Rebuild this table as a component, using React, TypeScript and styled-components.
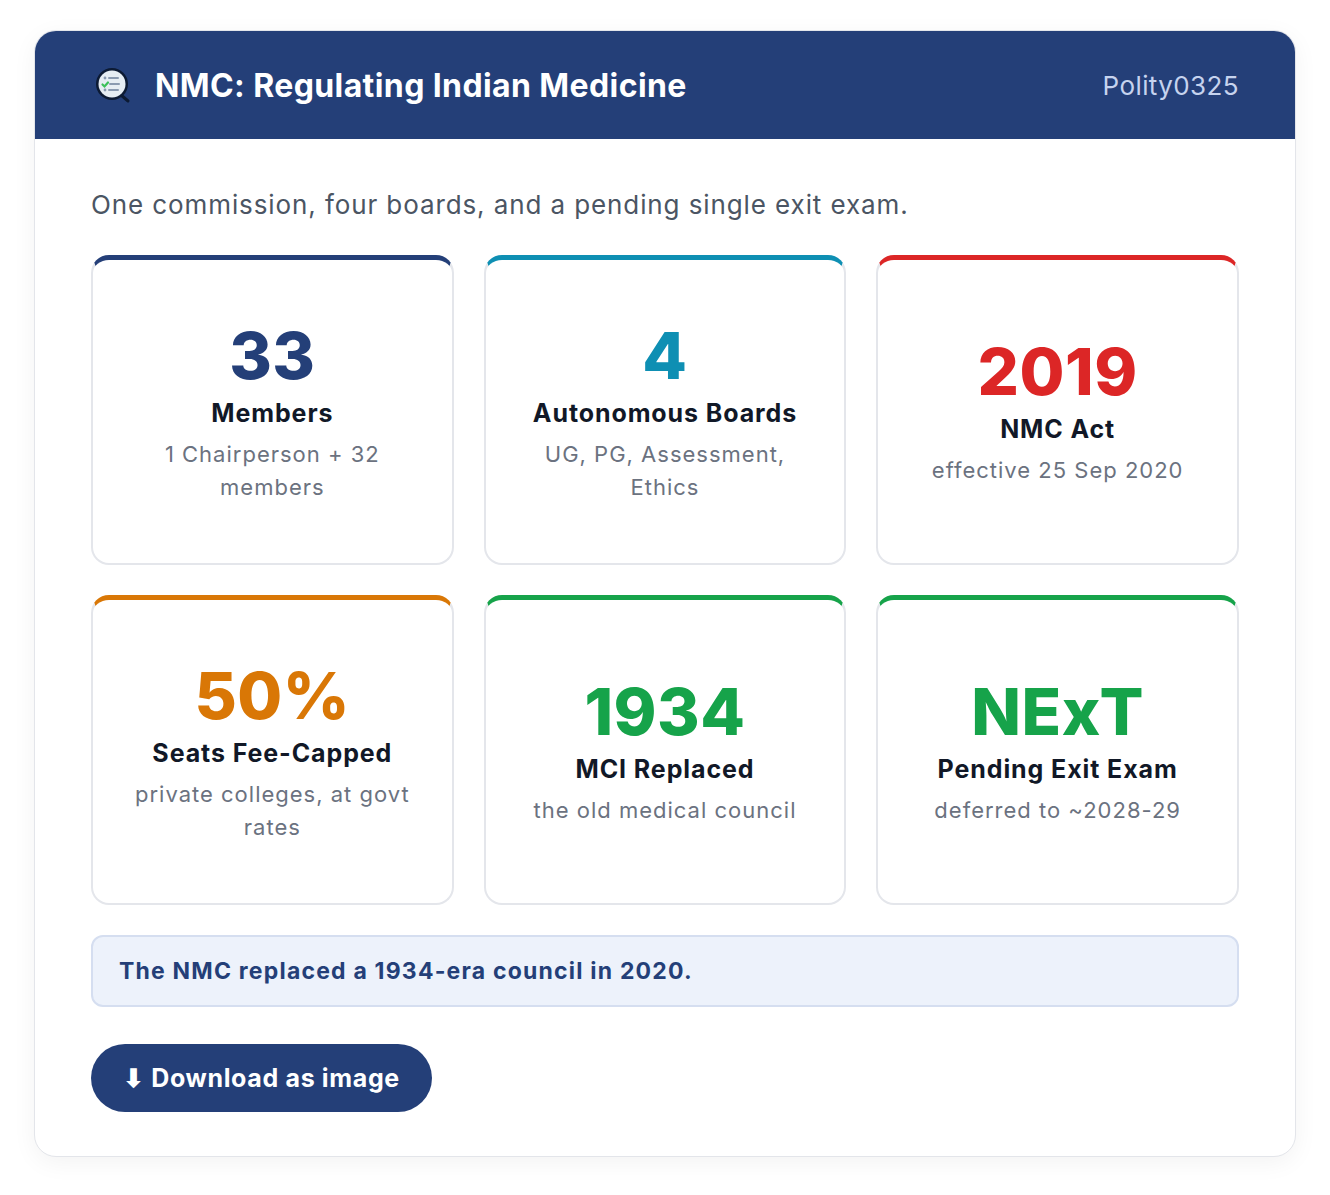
import styled, { createGlobalStyle } from "styled-components";

const NAVY = "#243f78";

interface Stat {
  value: string;
  label: string;
  sub: string;
  color: string;
}

const stats: Stat[] = [
  { value: "33", label: "Members", sub: "1 Chairperson + 32 members", color: NAVY },
  { value: "4", label: "Autonomous Boards", sub: "UG, PG, Assessment, Ethics", color: "#0e8fb3" },
  { value: "2019", label: "NMC Act", sub: "effective 25 Sep 2020", color: "#dc2626" },
  { value: "50%", label: "Seats Fee-Capped", sub: "private colleges, at govt rates", color: "#d97706" },
  { value: "1934", label: "MCI Replaced", sub: "the old medical council", color: "#16a34a" },
  { value: "NExT", label: "Pending Exit Exam", sub: "deferred to ~2028-29", color: "#16a34a" },
];

function LogoIcon() {
  return (
    <svg width="40" height="40" viewBox="0 0 40 40">
      <path d="M28 30 L35 36" stroke="#0c1a33" strokeWidth="3" strokeLinecap="round" />
      <circle cx="19" cy="19" r="16" fill="#0c1a33" />
      <circle cx="19" cy="19" r="13.5" fill="#e6edf3" />
      <circle cx="12" cy="13" r="1.4" fill="#8a9ab0" />
      <rect x="15" y="12" width="11" height="2" rx="1" fill="#8a9ab0" />
      <path d="M9.5 19.5 l2 2 l3.5 -4" stroke="#3cc15a" strokeWidth="2.2" fill="none" strokeLinecap="round" />
      <rect x="16" y="18" width="11" height="2" rx="1" fill="#8a9ab0" />
      <circle cx="12" cy="25" r="1.4" fill="#8a9ab0" />
      <rect x="15" y="24" width="11" height="2" rx="1" fill="#8a9ab0" />
    </svg>
  );
}

export default function App() {
  return (
    <>
      <GlobalStyle />
      <Frame>
        <Header>
          <Brand>
            <LogoIcon />
            <Title>NMC: Regulating Indian Medicine</Title>
          </Brand>
          <Tag>Polity0325</Tag>
        </Header>
        <Body>
          <Intro>One commission, four boards, and a pending single exit exam.</Intro>
          <Grid>
            {stats.map((s) => (
              <Card key={s.label} accent={s.color}>
                <Value accent={s.color}>{s.value}</Value>
                <Label>{s.label}</Label>
                <Sub>{s.sub}</Sub>
              </Card>
            ))}
          </Grid>
          <Callout>The NMC replaced a 1934-era council in 2020.</Callout>
          <DownloadButton type="button">⬇ Download as image</DownloadButton>
        </Body>
      </Frame>
    </>
  );
}

const GlobalStyle = createGlobalStyle`
  body {
    margin: 0;
    background: #ffffff;
    font-family: Inter, "Noto Sans", sans-serif;
  }
`;

const Frame = styled.div`
  margin: 30px 34px;
  width: 1262px;
  box-sizing: border-box;
  border: 1px solid #e3e5ea;
  border-radius: 22px;
  overflow: hidden;
  background: #ffffff;
  box-shadow: 0 6px 24px rgba(0, 0, 0, 0.05);
`;

const Header = styled.div`
  height: 108px;
  background: ${NAVY};
  display: flex;
  align-items: center;
  justify-content: space-between;
  padding: 0 56px 0 58px;
`;

const Brand = styled.div`
  display: flex;
  align-items: center;
  gap: 22px;
`;

const Title = styled.h1`
  margin: 0;
  color: #ffffff;
  font-size: 32px;
  font-weight: 700;
  letter-spacing: 0.4px;
`;

const Tag = styled.span`
  color: #c6d3ee;
  font-size: 26px;
  font-weight: 400;
  letter-spacing: 0.4px;
`;

const Body = styled.div`
  padding: 46px 56px 44px;
`;

const Intro = styled.p`
  margin: 0 0 30px;
  font-size: 26px;
  line-height: 40px;
  color: #4b5563;
  letter-spacing: 0.9px;
`;

const Grid = styled.div`
  display: grid;
  grid-template-columns: repeat(3, 1fr);
  gap: 30px;
`;

const Card = styled.div<{ accent: string }>`
  height: 310px;
  box-sizing: border-box;
  border: 2px solid #e4e6eb;
  border-top: 5px solid ${(p) => p.accent};
  border-radius: 18px;
  padding: 4px 32px 0;
  display: flex;
  flex-direction: column;
  align-items: center;
  justify-content: center;
  text-align: center;
`;

const Value = styled.div<{ accent: string }>`
  color: ${(p) => p.accent};
  font-size: 65px;
  line-height: 64px;
  font-weight: 800;
  letter-spacing: 0.5px;
`;

const Label = styled.div`
  margin-top: 10px;
  font-size: 25px;
  line-height: 30px;
  font-weight: 700;
  color: #111827;
  letter-spacing: 0.9px;
`;

const Sub = styled.div`
  margin-top: 10px;
  font-size: 22px;
  line-height: 33px;
  color: #6b7280;
  letter-spacing: 1px;
`;

const Callout = styled.div`
  margin-top: 30px;
  height: 72px;
  box-sizing: border-box;
  display: flex;
  align-items: center;
  padding: 0 26px;
  background: #edf2fb;
  border: 2px solid #d5def0;
  border-radius: 12px;
  color: ${NAVY};
  font-size: 23px;
  font-weight: 700;
  letter-spacing: 1.2px;
`;

const DownloadButton = styled.button`
  margin-top: 37px;
  height: 68px;
  padding: 0 32px;
  border: none;
  border-radius: 34px;
  background: ${NAVY};
  color: #ffffff;
  font-family: Inter, "Noto Sans", sans-serif;
  font-size: 25px;
  font-weight: 700;
  letter-spacing: 0.65px;
  cursor: pointer;
`;
